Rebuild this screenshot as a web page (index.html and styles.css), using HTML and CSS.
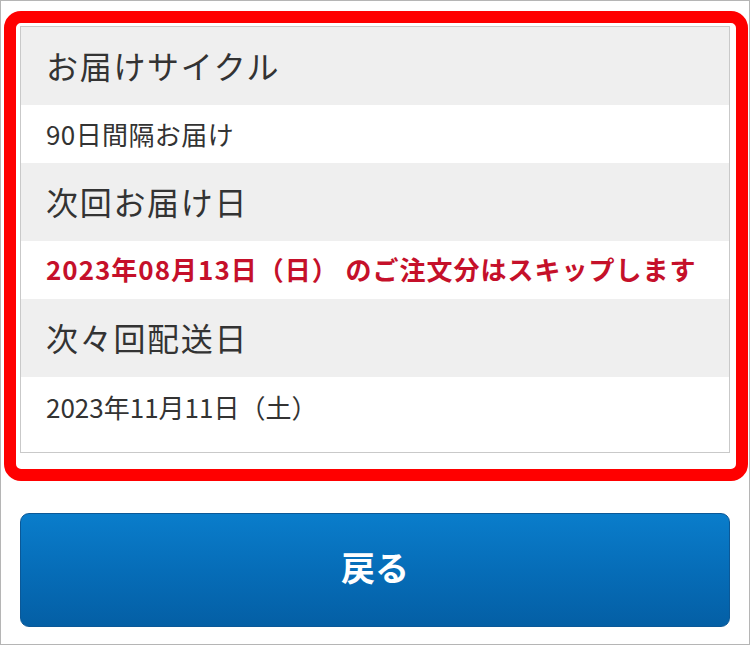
FILE: index.html
```html
<!DOCTYPE html>
<html lang="ja">
<head>
<meta charset="utf-8">
<link rel="stylesheet" href="styles.css">
</head>
<body>
<div class="page">
  <div class="frame">
    <div class="panel">
      <div class="row head">お届けサイクル</div>
      <div class="row body">90日間隔お届け</div>
      <div class="row head">次回お届け日</div>
      <div class="row body red">2023年08月13日（日） のご注文分はスキップします</div>
      <div class="row head">次々回配送日</div>
      <div class="row body last">2023年11月11日（土）</div>
    </div>
  </div>
  <div class="actions">
    <button class="back" type="button">戻る</button>
  </div>
</div>
</body>
</html>
```
FILE: styles.css
```css
html, body {
  margin: 0;
  padding: 0;
  background: #fff;
}
.page {
  width: 750px;
  height: 645px;
  box-sizing: border-box;
  border: 1px solid #b5b5b5;
  padding: 10px 0 0 3px;
  font-family: "Noto Sans CJK JP", "Noto Sans", sans-serif;
  color: #333;
}
.frame {
  width: 744px;
  height: 470px;
  box-sizing: border-box;
  border: 12px solid #ff0000;
  border-radius: 17px;
  padding: 3px 6px 16px 4px;
}
.panel {
  border: 1px solid #c9c9c9;
  background: #fff;
}
.row {
  display: flex;
  align-items: center;
  padding-left: 25px;
  box-sizing: border-box;
}
.head {
  height: 78px;
  background: #efefef;
  font-size: 32px;
  letter-spacing: 1.7px;
  padding-bottom: 2px;
}
.body {
  height: 58px;
  font-size: 26px;
  letter-spacing: 0.4px;
  padding-bottom: 2px;
}
.red {
  color: #c5102a;
  font-weight: bold;
  letter-spacing: 1px;
  padding-bottom: 4px;
}
.last {
  height: 75px;
  align-items: flex-start;
  padding-top: 11px;
  letter-spacing: 0;
}
.actions {
  padding: 32px 0 0 16px;
}
.back {
  display: block;
  width: 710px;
  height: 114px;
  box-sizing: border-box;
  border: 1px solid #0b5897;
  border-radius: 9px;
  background: linear-gradient(to bottom, #0a7dcb 0%, #066db8 50%, #045fa5 100%);
  color: #fff;
  font-family: "Noto Sans CJK JP", sans-serif;
  font-size: 34px;
  font-weight: bold;
  padding: 0 0 8px 0;
  margin: 0;
  cursor: pointer;
}
```
